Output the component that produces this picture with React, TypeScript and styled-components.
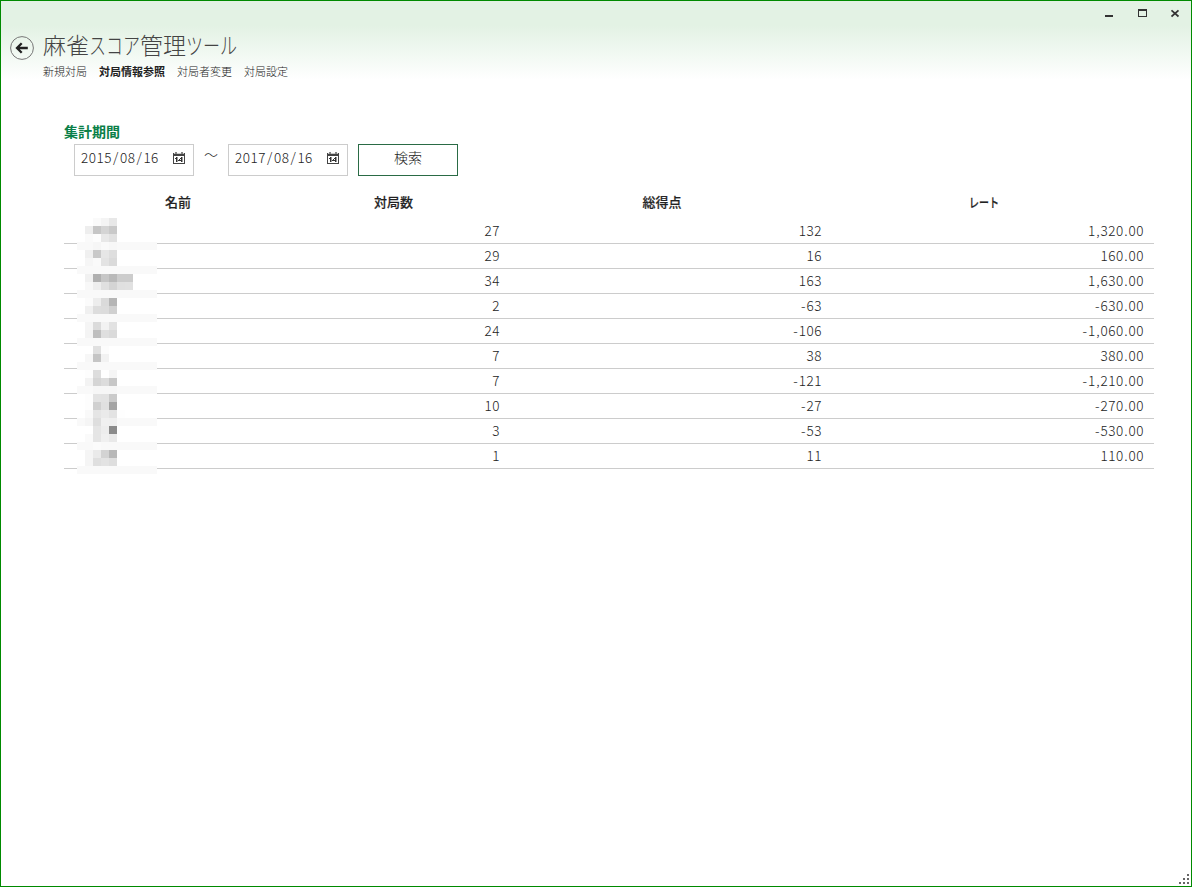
import React from "react";
import styled, { createGlobalStyle } from "styled-components";

const GlobalStyle = createGlobalStyle`
  *, *::before, *::after { box-sizing: border-box; }
  body {
    margin: 0;
    font-family: "Noto Sans CJK JP", sans-serif;
    font-weight: 300;
    color: #222;
    background: #fff;
  }
`;

const Window = styled.div`
  position: relative;
  width: 1192px;
  height: 887px;
  overflow: hidden;
  border: 1px solid #008a00;
  background: linear-gradient(#e3f2e4 0, #e3f2e4 25px, #fff 79px);
`;

const WindowButtons = styled.div`
  display: flex;
  justify-content: flex-end;
  height: 29px;
  padding: 7px 8px 0 0;
  gap: 21px;
`;

const WindowIcon = styled.svg`
  display: block;
  width: 12px;
  height: 12px;
`;

const Header = styled.header`
  display: flex;
  height: 60px;
  padding-left: 8px;
`;

const BackButton = styled.button`
  width: 26px;
  height: 26px;
  margin: 5px 8px 0 0;
  padding: 0;
  border: 0;
  background: none;
  svg { display: block; }
`;

const Title = styled.h1`
  display: flex;
  margin: 0;
  height: 33px;
  line-height: 28px;
  font-size: 23px;
  font-weight: 300;
  color: #444;
  white-space: nowrap;
`;

const Kana = styled.span<{ $width: number; $scale: number }>`
  display: inline-block;
  width: ${(p) => p.$width}px;
  white-space: nowrap;
  transform: scaleX(${(p) => p.$scale});
  transform-origin: left center;
`;

const Nav = styled.nav`
  display: flex;
  gap: 12px;
  line-height: 16px;
  font-size: 11px;
`;

const NavItem = styled.a<{ $active?: boolean }>`
  color: ${(p) => (p.$active ? "#222" : "#222")};
  font-weight: ${(p) => (p.$active ? 700 : 300)};
`;

const Content = styled.main`
  width: 1090px;
  margin: 32px 0 0 63px;
`;

const SectionTitle = styled.h2`
  margin: 0;
  height: 21px;
  line-height: 18px;
  font-size: 14px;
  font-weight: 700;
  color: #0a8048;
`;

const SearchBar = styled.div`
  display: flex;
  height: 33px;
  padding: 1px 0 0 10px;
`;

const DateBox = styled.div`
  display: flex;
  width: 120px;
  height: 32px;
  padding: 0 8px 0 6px;
  justify-content: space-between;
  border: 1px solid #ccc;
  background: #fff;
  line-height: 25px;
  svg { margin-top: 7px; }
`;

const DateText = styled.span`
  font-size: 13.5px;
  letter-spacing: 0.5px;
`;

const Punct = styled.span<{ $wide?: boolean }>`
  padding: 0 ${(p) => (p.$wide ? 1.1 : 0.5)}px;
`;

const Tilde = styled.span`
  width: 34px;
  text-align: center;
  font-size: 14px;
  line-height: 20px;
`;

const SearchButton = styled.button`
  width: 100px;
  height: 32px;
  margin-left: 10px;
  padding: 0 0 6px;
  border: 1px solid #2a6b45;
  background: #fff;
  font: 300 14px/24px "Noto Sans CJK JP", sans-serif;
  color: #222;
`;

const TableArea = styled.section`
  position: relative;
  margin-top: 13px;
`;

const Row = styled.div`
  display: grid;
  grid-template-columns: 230px 215px 322px 323px;
  height: 25px;
  border-bottom: 1px solid #ccc;
`;

const HeadRow = styled(Row)`
  height: 30px;
  border: 0;
`;

const HeadCell = styled.div<{ $inset?: number }>`
  padding-right: ${(p) => p.$inset ?? 16}px;
  text-align: center;
  font-size: 13px;
  line-height: 26px;
  font-weight: 500;
  -webkit-text-stroke: 0.2px #333;
`;

const Cell = styled.div`
  padding-right: 9px;
  text-align: right;
  font-size: 13.5px;
  line-height: 22px;
  letter-spacing: 0.5px;

  &:last-child { padding-right: 10px; }
`;

const Mosaic = styled.svg`
  position: absolute;
  left: 13px;
  top: 29px;
`;

const Grip = styled.svg`
  position: absolute;
  right: 2px;
  bottom: 2px;
`;

const records = [
  ["27", "132", "1,320.00"],
  ["29", "16", "160.00"],
  ["34", "163", "1,630.00"],
  ["2", "-63", "-630.00"],
  ["24", "-106", "-1,060.00"],
  ["7", "38", "380.00"],
  ["7", "-121", "-1,210.00"],
  ["10", "-27", "-270.00"],
  ["3", "-53", "-530.00"],
  ["1", "11", "110.00"],
];

const band = "f9 f9 f9 f9 f9 f9 f9 f9 f9 f9";

// Grey level of each 8px tile that masks the player names.
const tiles = [
  "ff ff fa f4 e8",
  "ff ee c6 d4 c9",
  "ff fa fd e8 e1",
  "f9 f9 f6 fa f7 f9 f9 f9 f9 f9",
  "ff f0 c9 e6 de",
  "ff f6 fa e3 da",
  band,
  "ff f1 b0 c6 b9 cc cc",
  "ff f8 ee e0 d4 e0 e1",
  band,
  "ff fb ed da b5",
  "ff f0 dd dc d0",
  band,
  "ff f5 db f2 e2",
  "ff f4 bf df da",
  band,
  "ff ff e0 fc",
  "ff f7 c5 f2",
  band,
  "ff fd dd fe f5",
  "ff f3 d5 dc c7",
  "f9 f9 f6 f6 f6 f9 f9 f9 f9 f9",
  "ff fd e3 e2 ca",
  "ff fd d0 e0 a4",
  "ff f9 e5 ea e3 fe",
  "f9 f5 de f0 ef f9 f9 f9 f9 f9",
  "ff ff e5 ed 8b",
  "ff fa e5 f0 e9",
  "f9 f9 fb f9 f9 f9 f9 f9 f9 f9",
  "ff f5 ea d3 b8",
  "ff f5 df e3 de",
  band,
].map((line) => line.split(" "));

// Gives separators the same loose spacing as the digits around them.
const Figures = ({ text }: { text: string }) => (
  <>
    {text.split(/([/,.-])/).map((part, i) =>
      i % 2 ? (
        <Punct key={i} $wide={part === "/"}>
          {part}
        </Punct>
      ) : (
        part
      )
    )}
  </>
);

const CalendarIcon = () => (
  <svg width="12" height="12" viewBox="0 0 12 12" shapeRendering="crispEdges">
    <path d="M0 1h12v11H0z" fill="#444" />
    <path d="M1 4h10v7H1z" fill="#fff" />
    <path d="M2 0h2v2H2zM8 0h2v2H8z" fill="#888" />
    <path d="M1 1h1v1H1zM4 1h4v1H4zM10 1h1v1h-1z" fill="#ccc" />
    <path d="M3 5h1v5H3zM2 6h1v1H2zM8 5h1v5H8zM5 8h5v1H5zM7 6h1v1H7zM6 7h1v1H6z" fill="#333" />
    <path d="M4 5h1v5H4zM9 5h1v5H9z" fill="#999" />
  </svg>
);

const DateField = ({ value }: { value: string }) => (
  <DateBox>
    <DateText>
      <Figures text={value} />
    </DateText>
    <CalendarIcon />
  </DateBox>
);

export default function App() {
  return (
    <>
      <GlobalStyle />
      <Window>
        <WindowButtons>
          <WindowIcon shapeRendering="crispEdges">
            <path d="M0 7h8v2H0z" fill="#333" />
          </WindowIcon>
          <WindowIcon shapeRendering="crispEdges">
            <path d="M0 1h9v8H0zM1 3v5h7V3z" fillRule="evenodd" fill="#333" />
          </WindowIcon>
          <WindowIcon>
            <path d="M.5 2.3l7 6.2M7.5 2.3l-7 6.2" stroke="#333" strokeWidth="1.7" />
          </WindowIcon>
        </WindowButtons>
        <Header>
          <BackButton aria-label="戻る">
            <svg width="26" height="26" viewBox="0 0 26 26" fill="none">
              <circle cx="13" cy="13" r="11.4" stroke="#777" />
              <path d="M18.8 13H9M12.7 8.2L8 13l4.7 4.8" stroke="#222" strokeWidth="2.3" />
            </svg>
          </BackButton>
          <div>
            <Title>
              麻雀<Kana $width={51} $scale={0.74}>スコア</Kana>管理
              <Kana $width={52} $scale={0.74}>ツール</Kana>
            </Title>
            <Nav>
              <NavItem>新規対局</NavItem>
              <NavItem $active>対局情報参照</NavItem>
              <NavItem>対局者変更</NavItem>
              <NavItem>対局設定</NavItem>
            </Nav>
          </div>
        </Header>
        <Content>
          <SectionTitle>集計期間</SectionTitle>
          <SearchBar>
            <DateField value="2015/08/16" />
            <Tilde>～</Tilde>
            <DateField value="2017/08/16" />
            <SearchButton>検索</SearchButton>
          </SearchBar>
          <TableArea>
            <HeadRow>
              <HeadCell $inset={2}>名前</HeadCell>
              <HeadCell>対局数</HeadCell>
              <HeadCell>総得点</HeadCell>
              <HeadCell $inset={18}>
                <Kana $width={30} $scale={0.77}>レート</Kana>
              </HeadCell>
            </HeadRow>
            {records.map((record, i) => (
              <Row key={i}>
                <span />
                {record.map((value, j) => (
                  <Cell key={j}>
                    <Figures text={value} />
                  </Cell>
                ))}
              </Row>
            ))}
            <Mosaic width="80" height="256" shapeRendering="crispEdges">
              {tiles.flatMap((line, y) =>
                line.map((v, x) => (
                  <rect key={`${x}-${y}`} x={x * 8} y={y * 8} width="8" height="8" fill={`#${v}${v}${v}`} />
                ))
              )}
            </Mosaic>
          </TableArea>
        </Content>
        <Grip width="10" height="10" shapeRendering="crispEdges">
          <path d="M8 0h2v2H8zM4 4h2v2H4zM8 4h2v2H8zM0 8h2v2H0zM4 8h2v2H4zM8 8h2v2H8z" fill="#666" />
        </Grip>
      </Window>
    </>
  );
}
